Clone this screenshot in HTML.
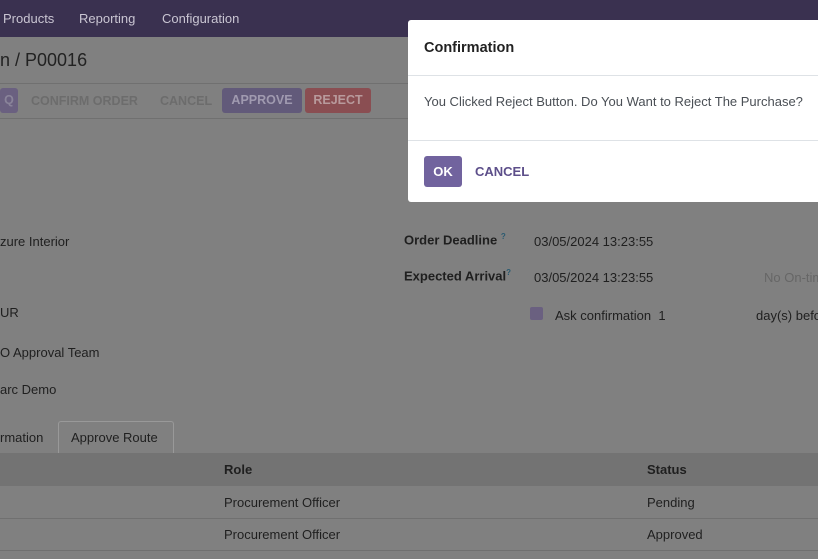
<!DOCTYPE html>
<html><head><style>
body{margin:0;width:818px;height:559px;overflow:hidden;background:#808080;font-family:"Liberation Sans",sans-serif;font-size:13px;color:#1f1f1f;position:relative}
.a{position:absolute;white-space:nowrap}
.nav{position:absolute;left:0;top:0;width:818px;height:37px;background:#3a3150}
.nav span{position:absolute;top:11px;color:#c9c5d2;font-size:13px}
.hl{position:absolute;left:0;width:818px;height:1px;background:#707070}
.btn{position:absolute;top:88px;height:25px;line-height:25px;border-radius:3px;font-weight:bold;font-size:12.5px;text-align:center}
.lbl{font-weight:bold}
</style></head><body>
<div class="nav"><span style="left:3px">Products</span><span style="left:79px">Reporting</span><span style="left:162px">Configuration</span></div>
<div class="a" style="left:0;top:50px;font-size:18px;color:#222">n / P00016</div>
<div class="hl" style="top:83px"></div>
<div class="btn" style="left:0;width:18px;background:#6a6080;color:#8a849a">Q</div>
<div class="a" style="left:31px;top:94px;font-weight:bold;font-size:12.5px;color:#6c6c6c">CONFIRM ORDER</div>
<div class="a" style="left:160px;top:94px;font-weight:bold;font-size:12.5px;color:#6c6c6c">CANCEL</div>
<div class="btn" style="left:222px;width:80px;background:#625a7a;color:#a09ab0">APPROVE</div>
<div class="btn" style="left:305px;width:66px;background:#8a4e52;color:#b89a9c">REJECT</div>
<div class="hl" style="top:118px"></div>
<div class="a" style="left:0;top:234px">zure Interior</div>
<div class="a" style="left:0;top:305px">UR</div>
<div class="a" style="left:0;top:345px">O Approval Team</div>
<div class="a" style="left:0;top:382px">arc Demo</div>
<div class="a lbl" style="left:404px;top:232px">Order Deadline <sup style="font-size:8px;color:#2a5a70">?</sup></div>
<div class="a" style="left:534px;top:234px">03/05/2024 13:23:55</div>
<div class="a lbl" style="left:404px;top:268px">Expected Arrival<sup style="font-size:8px;color:#2a5a70">?</sup></div>
<div class="a" style="left:534px;top:270px">03/05/2024 13:23:55</div>
<div class="a" style="left:764px;top:270px;color:#666">No On-time</div>
<div class="a" style="left:530px;top:307px;width:13px;height:13px;background:#6a6080;border-radius:2px"></div>
<div class="a" style="left:555px;top:308px">Ask confirmation&nbsp; 1</div>
<div class="a" style="left:756px;top:308px">day(s) before</div>
<div class="a" style="left:0;top:430px">rmation</div>
<div class="a" style="left:58px;top:421px;width:114px;height:33px;border:1px solid #999;border-bottom:none;background:#808080;border-radius:3px 3px 0 0"></div>
<div class="a" style="left:71px;top:430px">Approve Route</div>
<div class="a" style="left:0;top:453px;width:818px;height:33px;background:#737373"></div>
<div class="a lbl" style="left:224px;top:462px">Role</div>
<div class="a lbl" style="left:647px;top:462px">Status</div>
<div class="a" style="left:224px;top:495px">Procurement Officer</div>
<div class="a" style="left:647px;top:495px">Pending</div>
<div class="hl" style="top:518px"></div>
<div class="a" style="left:224px;top:527px">Procurement Officer</div>
<div class="a" style="left:647px;top:527px">Approved</div>
<div class="hl" style="top:550px"></div>
<div class="a" style="left:408px;top:20px;width:420px;height:182px;background:#fff;border-radius:3px">
 <div class="a" style="left:16px;top:20px;font-size:14.5px;font-weight:bold;color:#222">Confirmation</div>
 <div class="a" style="left:0;top:55px;width:420px;height:1px;background:#dee2e6"></div>
 <div class="a" style="left:16px;top:74px;color:#4a4f55">You Clicked Reject Button. Do You Want to Reject The Purchase?</div>
 <div class="a" style="left:0;top:120px;width:420px;height:1px;background:#dee2e6"></div>
 <div class="a" style="left:16px;top:136px;width:38px;height:31px;background:#71639e;border-radius:3px;color:#fff;font-weight:bold;text-align:center;line-height:31px">OK</div>
 <div class="a" style="left:67px;top:144px;color:#5d4f8a;font-weight:bold">CANCEL</div>
</div>
</body></html>
